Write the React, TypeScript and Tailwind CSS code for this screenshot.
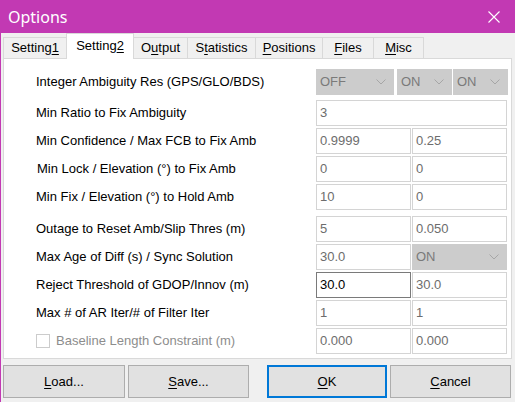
import type { ReactNode } from 'react';

// Small helper: "&" marks the mnemonic letter, which gets underlined
function Mnemonic({ label }: { label: string }) {
  const [pre, rest] = label.split('&');
  if (rest === undefined) return <>{label}</>;
  return (
    <>
      {pre}
      <span className="underline decoration-1 underline-offset-[2px]">{rest[0]}</span>
      {rest.slice(1)}
    </>
  );
}

const tabs = [
  { label: 'Setting&1', w: 'w-[64px]' },
  { label: 'Setting&2', w: 'w-[68px]', active: true },
  { label: 'O&utput', w: 'w-[55px]' },
  { label: 'S&tatistics', w: 'w-[69px]' },
  { label: '&Positions', w: 'w-[68px]' },
  { label: '&Files', w: 'w-[52px]' },
  { label: '&Misc', w: 'w-[51px]' },
];

function Chevron() {
  return (
    <svg width="10" height="6" viewBox="0 0 10 6" className="shrink-0">
      <polyline points="0.5,0.5 5,5 9.5,0.5" fill="none" stroke="#a6a6a6" strokeWidth="1" />
    </svg>
  );
}

function Select({ value, w }: { value: string; w: string }) {
  return (
    <div className={`flex h-full items-center justify-between border border-[#cccccc] bg-[#cccccc] pl-[3px] pr-[7px] text-[#7a7a7a] ${w}`}>
      <span>{value}</span>
      <Chevron />
    </div>
  );
}

function Field({ value, wide, focused }: { value: string; wide?: boolean; focused?: boolean }) {
  return (
    <div
      className={`flex h-full items-center border bg-white pl-[3px] ${wide ? 'w-[191px]' : 'w-[95px]'} ${
        focused ? 'border-[#7a7a7a] text-black' : 'border-[#d4d4d4] text-[#6d6d6d]'
      }`}
    >
      {value}
    </div>
  );
}

function Row({ label, children, className = '' }: { label: ReactNode; children: ReactNode; className?: string }) {
  return (
    <div className={`flex h-[26px] items-center ${className}`}>
      <div className="w-[280px] shrink-0 text-[13px] text-black">{label}</div>
      <div className="flex h-full gap-[1px]">{children}</div>
    </div>
  );
}

function Button({ label, w, focused }: { label: string; w: string; focused?: boolean }) {
  return (
    <button
      className={`flex h-[33px] items-center justify-center bg-[#e1e1e1] text-[13px] text-black ${w} ${
        focused ? 'border-2 border-[#0078d7]' : 'border border-[#adadad]'
      }`}
    >
      <Mnemonic label={label} />
    </button>
  );
}

export default function App() {
  return (
    <div className="flex h-[402px] w-[515px] flex-col overflow-hidden border-l border-[#c239b3] bg-[#f0f0f0] font-['Liberation_Sans',Arial,sans-serif] text-[13px]">
      {/* Title bar */}
      <div className="flex h-[33px] shrink-0 items-center justify-between bg-[#c239b3] pl-[7px] pr-[15px]">
        <span className="font-['Noto_Sans',sans-serif] text-[16px] text-white">Options</span>
        <svg width="12" height="12" viewBox="0 0 12 12">
          <path d="M0.5 0.5 L11.5 11.5 M11.5 0.5 L0.5 11.5" stroke="white" strokeWidth="1.1" />
        </svg>
      </div>

      {/* Tabs */}
      <div className="relative z-10 flex h-[25px] shrink-0 items-end pl-[2px]">
        {tabs.map((t) => (
          <div
            key={t.label}
            className={`-ml-px flex items-center justify-center border border-b-0 border-[#d9d9d9] text-black first:ml-0 ${t.w} ${
              t.active ? 'mb-[-1px] h-[26px] bg-white pb-[2px]' : 'h-[21px] bg-[#f0f0f0]'
            }`}
          >
            <Mnemonic label={t.label} />
          </div>
        ))}
      </div>

      {/* Page */}
      <div className="ml-[2px] flex h-[301px] w-[509px] shrink-0 flex-col border border-[#d9d9d9] bg-white pl-[32px] pt-[10px]">
        <Row label="Integer Ambiguity Res (GPS/GLO/BDS)">
          <Select value="OFF" w="w-[78px]" />
          <div className="w-[1px]" />
          <Select value="ON" w="w-[55px]" />
          <Select value="ON" w="w-[55px]" />
        </Row>
        <Row label="Min Ratio to Fix Ambiguity" className="mt-[5px]">
          <Field value="3" wide />
        </Row>
        <Row label="Min Confidence / Max FCB to Fix Amb" className="mt-[2px]">
          <Field value="0.9999" />
          <Field value="0.25" />
        </Row>
        <Row label={<span className="pl-[1px]">Min Lock / Elevation (°) to Fix Amb</span>} className="mt-[2px]">
          <Field value="0" />
          <Field value="0" />
        </Row>
        <Row label="Min Fix / Elevation (°) to Hold Amb" className="mt-[2px]">
          <Field value="10" />
          <Field value="0" />
        </Row>

        <Row label="Outage to Reset Amb/Slip Thres (m)" className="mt-[6px]">
          <Field value="5" />
          <Field value="0.050" />
        </Row>
        <Row label="Max Age of Diff (s) / Sync Solution" className="mt-[2px]">
          <Field value="30.0" />
          <Select value="ON" w="w-[95px]" />
        </Row>
        <Row label="Reject Threshold of GDOP/Innov (m)" className="mt-[2px]">
          <Field value="30.0" focused />
          <Field value="30.0" />
        </Row>
        <Row label="Max # of AR Iter/# of Filter Iter" className="mt-[2px]">
          <Field value="1" />
          <Field value="1" />
        </Row>
        <Row
          label={
            <label className="flex items-center gap-[6px] text-[#8d8d8d]">
              <span className="h-[14px] w-[14px] border border-[#cccccc] bg-white" />
              Baseline Length Constraint (m)
            </label>
          }
          className="mt-[2px]"
        >
          <Field value="0.000" />
          <Field value="0.000" />
        </Row>
      </div>

      {/* Buttons */}
      <div className="ml-[2px] mt-[6px] flex">
        <Button label="&Load..." w="w-[122px]" />
        <div className="w-[3px]" />
        <Button label="&Save..." w="w-[121px]" />
        <div className="w-[18px]" />
        <Button label="&OK" w="w-[120px]" focused />
        <div className="w-[3px]" />
        <Button label="&Cancel" w="w-[121px]" />
      </div>
    </div>
  );
}
